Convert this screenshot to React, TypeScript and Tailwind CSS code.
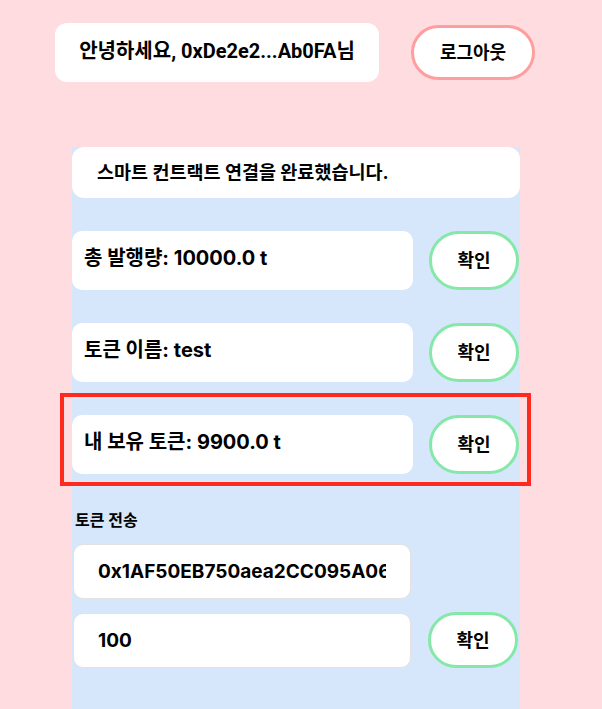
const panelFont = { fontFamily: 'Inter, "Noto Sans CJK KR", sans-serif' };

function InfoRow({ label, highlight }: { label: string; highlight?: boolean }) {
  return (
    <div className="relative flex items-center gap-4">
      {highlight && (
        <div className="absolute left-[-12px] right-[-11px] top-[-22px] bottom-[-12px] border-4 border-[#ff2a1f] pointer-events-none" />
      )}
      <div className="w-[341px] h-[59px] bg-white rounded-[10px] pl-3 pb-[6px] flex items-center text-[20px] font-bold text-black">
        {label}
      </div>
      <button className="w-[90px] h-[59px] rounded-full border-[3px] border-[#86e8a8] bg-white text-[18px] font-bold text-black">
        확인
      </button>
    </div>
  );
}

export default function App() {
  return (
    <div className="min-h-screen bg-[#ffdcdf] overflow-hidden" style={{ height: 709 }}>
      {/* Header */}
      <div
        className="flex items-center gap-8 pl-[55px] pt-[23px]"
        style={{ fontFamily: 'Roboto, "Noto Sans CJK KR", sans-serif' }}
      >
        <div className="w-[324px] h-[59px] bg-white rounded-xl flex items-center justify-center pb-[3px] text-[20px] font-bold text-black">
          안녕하세요, 0xDe2e2...Ab0FA님
        </div>
        <button className="w-[124px] h-[55px] rounded-full border-[3px] border-[#ff9e9e] bg-white text-[18px] font-bold text-black">
          로그아웃
        </button>
      </div>

      {/* Panel */}
      <div className="ml-[72px] mt-[65px] w-[448px] h-[600px] bg-[#d6e6fb] flex flex-col" style={panelFont}>
        <div className="h-[51px] bg-white rounded-xl pl-[25px] flex items-center text-[18.5px] font-bold text-black">
          스마트 컨트랙트 연결을 완료했습니다.
        </div>

        <div className="mt-[33px] flex flex-col gap-[33px]">
          <InfoRow label="총 발행량: 10000.0 t" />
          <InfoRow label="토큰 이름: test" />
          <InfoRow label="내 보유 토큰: 9900.0 t" highlight />
        </div>

        <div className="mt-[34px] pl-[3px] text-[16px] font-bold text-black">토큰 전송</div>

        <div className="mt-[12px] flex flex-col gap-[13px]">
          <div className="flex items-center">
            <input
              readOnly
              value="0x1AF50EB750aea2CC095A06F8c3a4e1"
              className="ml-px w-[338px] h-[55px] bg-white rounded-[10px] border border-[#e2e2e2] pl-6 pr-6 text-[19px] font-bold text-black outline-none"
            />
          </div>
          <div className="flex items-center gap-[17px]">
            <input
              readOnly
              value="100"
              className="ml-px w-[338px] h-[55px] bg-white rounded-[10px] border border-[#e2e2e2] pl-6 pr-6 text-[19px] font-bold text-black outline-none"
            />
            <button className="w-[90px] h-[56px] rounded-full border-[3px] border-[#86e8a8] bg-white text-[18px] font-bold text-black">
              확인
            </button>
          </div>
        </div>
      </div>
    </div>
  );
}
